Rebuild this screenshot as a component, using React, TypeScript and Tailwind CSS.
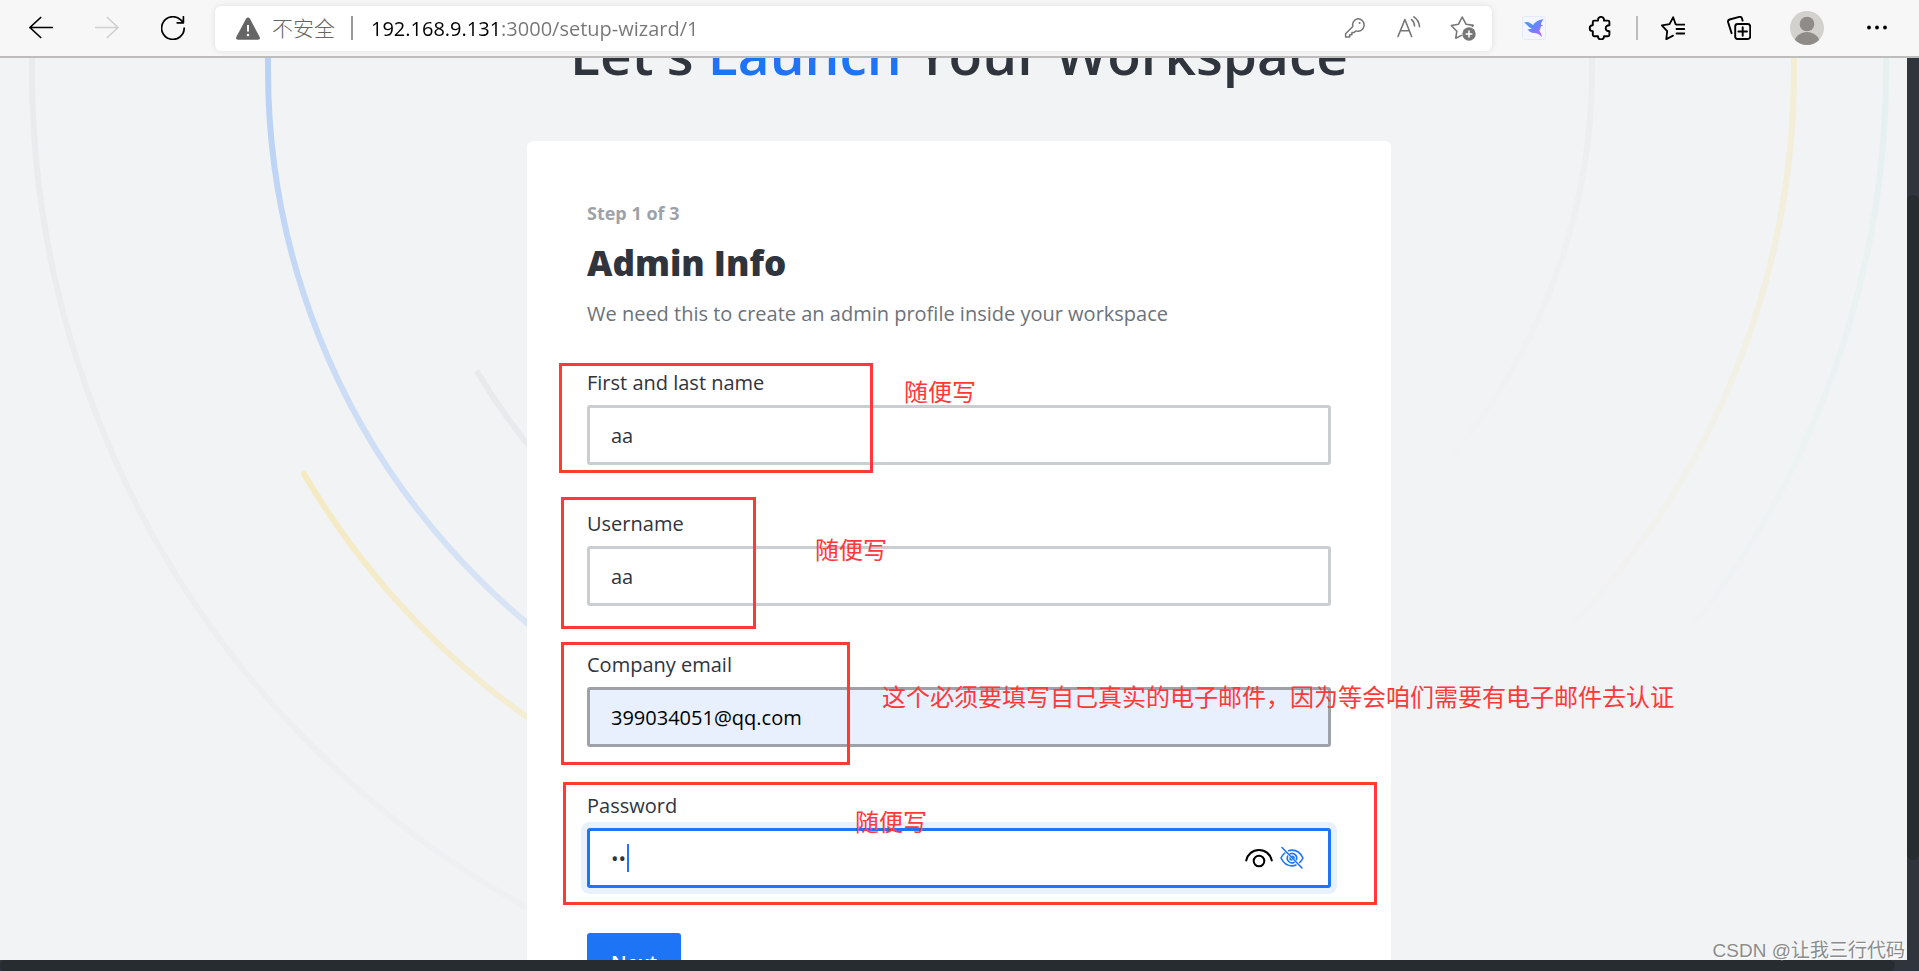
import { useState, type ReactNode } from "react";

function ToolButton({ label, className = "w-[66px]", children }: { label: string; className?: string; children: ReactNode }) {
  return (
    <button type="button" aria-label={label} className={`flex h-10 shrink-0 items-center justify-center ${className}`}>
      {children}
    </button>
  );
}

function Icon({ className = "size-6", children }: { className?: string; children: ReactNode }) {
  return (
    <svg
      viewBox="0 0 24 24"
      fill="none"
      stroke="currentColor"
      strokeWidth="1.7"
      strokeLinecap="round"
      strokeLinejoin="round"
      className={className}
      aria-hidden="true"
    >
      {children}
    </svg>
  );
}

function Toolbar() {
  const [url, setUrl] = useState("192.168.9.131:3000/setup-wizard/1");
  return (
    <header className="flex h-[58px] shrink-0 items-center border-b-2 border-[#bdbdbd] bg-[#f7f7f7] pr-[7px] pl-2 text-black">
      <ToolButton label="Back">
        <Icon>
          <path d="M23.3 11.5H.9M11.7 1.5.9 11.5l10.8 10" />
        </Icon>
      </ToolButton>
      <ToolButton label="Forward" className="w-[66px] text-[#d0d0d0]">
        <Icon>
          <path d="M.7 11.5h22.4M12.3 1.5l10.8 10-10.8 10" />
        </Icon>
      </ToolButton>
      <ToolButton label="Refresh">
        <Icon>
          <path d="M23.2 12a11.3 11.3 0 1 1-3.5-8.1l2.5 2.6M22.4.8v6h-6.2" />
        </Icon>
      </ToolButton>

      <div className="mx-[9px] flex h-[45px] min-w-0 flex-1 items-center rounded-md bg-white pr-0.5 pl-[21px] text-[#767676] shadow-[0_0_6px_rgba(0,0,0,0.1)]">
        <svg viewBox="0 0 24 23" className="h-[23px] w-6 shrink-0" aria-hidden="true">
          <path d="M12 .5c.8 0 1.400.4 1.800 1.100l9.800 18.200c.8 1.500 0 2.900-1.600 2.900H2c-1.600 0-2.400-1.400-1.600-2.900L10.200 1.600C10.600.9 11.200.5 12 .5Z" fill="#666" />
          <path d="M12 8v6.500" stroke="#fff" strokeWidth="2" />
          <circle cx="12" cy="18" r="1.300" fill="#fff" />
        </svg>
        <span className="ml-3 shrink-0 text-[21px] leading-8 font-light text-[#666]">不安全</span>
        <span className="ml-4 h-6 w-0.5 shrink-0 bg-[#999]" />
        <input
          aria-label="Address"
          value={url}
          onChange={(e) => setUrl(e.target.value)}
          className="ml-[18px] h-8 min-w-0 flex-1 bg-[linear-gradient(to_right,#000_131px,#767676_131px)] bg-clip-text text-[20px] text-transparent caret-black outline-none"
        />
        <ToolButton label="Passwords" className="w-[54px]">
          <Icon className="size-6">
            <path
              strokeWidth="1.5"
              d="M14.500 2.700a6.300 6.300 0 1 1-1.800 12.200l-1.600 1.700H8.900v2.200H6.700v2.300H2.600v-3.400l7.200-7.200a6.300 6.300 0 0 1 4.700-7.800Z"
            />
            <circle cx="16.600" cy="7" r="1" fill="currentColor" stroke="none" />
          </Icon>
        </ToolButton>
        <ToolButton label="Read aloud" className="w-[54px]">
          <Icon>
            <path strokeWidth="1.6" d="M1 20.500 7.900 3.500l6.700 17M3.400 14.800h9M14.600 3.600c1.800 1.500 2.900 3.800 2.900 6.400M16.900.9c3.200 2.200 5.300 5.400 5.600 9.700" />
          </Icon>
        </ToolButton>
        <ToolButton label="Add to favorites" className="w-[54px]">
          <svg viewBox="0 0 26 26" fill="none" className="size-[26px]" aria-hidden="true">
            <path
              d="M11.500 20.400 5.800 23.200l1-7L1.300 10.500l7.200-1.300L12.200 2l3.800 7.200 7.300 1.200-1 .9"
              stroke="currentColor"
              strokeWidth="1.600"
              strokeLinecap="round"
              strokeLinejoin="round"
            />
            <circle cx="19" cy="19" r="6.700" fill="currentColor" />
            <path d="M19 15.600v6.800M15.600 19h6.800" stroke="#fff" strokeWidth="1.600" />
          </svg>
        </ToolButton>
      </div>

      <ToolButton label="Bird extension">
        <svg viewBox="0 0 24 24" className="size-6" aria-hidden="true">
          <defs>
            <linearGradient id="bird" x1="0" y1="0" x2="1" y2="1">
              <stop offset="0" stopColor="#3ba7ff" />
              <stop offset="0.500" stopColor="#6a83ff" />
              <stop offset="1" stopColor="#c45cf6" />
            </linearGradient>
          </defs>
          <rect x="0.500" y="0.500" width="23" height="23" rx="2.500" fill="#f4f6ff" stroke="#e6ebfb" />
          <path
            d="M2 6.400c2.800-1 5-.5 6.600 1l2.600 1.700c1.500-2.900 4.900-5.300 10.400-5.900-1.800 2-2.700 3.900-2.600 5.500l2.200.7-2.400 1.100c-.1 1.700-.6 3.100-1.500 4.300 1.400 1.900 2.300 3.900 2.700 6.200-2-2.500-4.300-3.700-6.900-4.100-3.400.3-6-1.200-7.600-3.700 2 .2 3.400 0 4.300-.6C6.500 11.300 4.800 8.200 2 6.400Z"
            fill="url(#bird)"
          />
        </svg>
      </ToolButton>
      <ToolButton label="Extensions">
        <Icon>
          <path
            strokeWidth="1.900"
            d="M6.300 4.600H10c-.1-2.200 1-3.700 3-3.700s3.100 1.500 3 3.700h3.900c.9 0 1.500.6 1.500 1.500v3.200c-2.200-.1-3.700.9-3.700 2.900s1.500 3 3.700 2.900v3.700c0 .9-.6 1.500-1.500 1.500H16c.1 1.800-1.100 3.100-3 3.100s-3.100-1.300-3-3.100H6.300c-.9 0-1.500-.6-1.500-1.500v-3.700c-1.900 0-3.100-1.100-3.100-2.900s1.200-3 3.100-2.900V6.100c0-.9.600-1.500 1.500-1.500Z"
          />
        </Icon>
      </ToolButton>
      <span className="mr-0.5 ml-[3px] h-6 w-0.5 shrink-0 bg-[#bdbdbd]" />
      <ToolButton label="Favorites">
        <Icon>
          <path
            strokeWidth="1.800"
            d="M14.600 8.200 12.200 1.200 8.500 8.100.8 9.400l5.400 5.800-.9 8 6.700-3.600M15.500 8.600h8M15.500 13h8M15.500 17.500h8"
          />
        </Icon>
      </ToolButton>
      <ToolButton label="Collections">
        <Icon>
          <rect x="8.200" y="8" width="15" height="15" rx="2.500" strokeWidth="1.900" />
          <path strokeWidth="1.900" d="M15.700 11.200v8.600M11.400 15.500H20M4.600 17.200 1.100 6.200c-.3-1.200.3-2.300 1.500-2.700L12.300.9c1.200-.3 2.200.2 2.600 1.400l.7 2.300" />
        </Icon>
      </ToolButton>
      <ToolButton label="Profile" className="w-[70px]">
        <svg viewBox="0 0 34 34" className="size-[34px]" aria-hidden="true">
          <defs>
            <clipPath id="avatar">
              <circle cx="17" cy="17" r="17" />
            </clipPath>
          </defs>
          <g clipPath="url(#avatar)">
            <rect width="34" height="34" fill="#d3d1ce" />
            <circle cx="17" cy="13" r="7.300" fill="#8f8b88" />
            <ellipse cx="17" cy="33" rx="13" ry="12" fill="#8f8b88" />
          </g>
        </svg>
      </ToolButton>
      <ToolButton label="Settings and more" className="w-[70px]">
        <Icon>
          <g fill="currentColor" stroke="none">
            <circle cx="4" cy="11.500" r="1.900" />
            <circle cx="12" cy="11.500" r="1.900" />
            <circle cx="20" cy="11.500" r="1.900" />
          </g>
        </Icon>
      </ToolButton>
    </header>
  );
}

function Fade({ id, color, from, to, end }: { id: string; color: string; from: number; to: number; end: number }) {
  return (
    <linearGradient id={id} gradientUnits="userSpaceOnUse" x1="0" y1="0" x2="0" y2={end}>
      <stop offset="0" stopColor={color} stopOpacity={from} />
      <stop offset="1" stopColor={color} stopOpacity={to} />
    </linearGradient>
  );
}

function Rings() {
  return (
    <svg
      viewBox="0 0 1919 913"
      preserveAspectRatio="xMidYMin slice"
      fill="none"
      strokeWidth="6"
      strokeLinecap="round"
      className="absolute inset-0 size-full"
      aria-hidden="true"
    >
      <defs>
        <Fade id="outer" color="#9ea2a8" from={0.1} to={0.03} end={913} />
        <Fade id="blue" color="#1d74f5" from={0.27} to={0.08} end={680} />
        <Fade id="gold" color="#ffd031" from={0.42} to={0.12} end={800} />
        <Fade id="inner" color="#9ea2a8" from={0.14} to={0.1} end={500} />
        <Fade id="grayRight" color="#9ea2a8" from={0.07} to={0} end={440} />
        <Fade id="goldRight" color="#ffd031" from={0.17} to={0} end={590} />
        <Fade id="greenRight" color="#2dbf9a" from={0.06} to={0} end={600} />
      </defs>
      <path d="M32 0V12A956 956 0 0 0 988 968" stroke="url(#outer)" />
      <path d="M268 0V12A720 720 0 0 0 988 732" stroke="url(#blue)" />
      <path d="M304 416A795 795 0 0 0 988 807" stroke="url(#gold)" />
      <path d="M478 315A593 593 0 0 0 988 605" stroke="url(#inner)" />
      <path d="M1592 0V12A603 603 0 0 1 989 615" stroke="url(#grayRight)" />
      <path d="M1794 0V12A804 804 0 0 1 990 816" stroke="url(#goldRight)" />
      <path d="M1886 0V12A897 897 0 0 1 989 909" stroke="url(#greenRight)" />
    </svg>
  );
}

const fieldBase = "h-[60px] w-full rounded-[3px] border-[3px] px-[21px] text-[20px] outline-none";

function Field({ id, label, children }: { id: string; label: string; children: ReactNode }) {
  return (
    <div className="flex flex-col gap-[7px]">
      <label htmlFor={id} className="text-[20px] leading-[30px] font-medium text-[#2f343d]">
        {label}
      </label>
      {children}
    </div>
  );
}

function Note({ className, children }: { className: string; children: ReactNode }) {
  return (
    <p className={`pointer-events-none absolute text-[24px] leading-8 whitespace-nowrap text-[#ff3838] ${className}`}>
      {children}
    </p>
  );
}

function Frame({ className }: { className: string }) {
  return <div className={`pointer-events-none absolute border-[3px] border-[#ff3838] ${className}`} />;
}

function SetupForm() {
  const [name, setName] = useState("aa");
  const [user, setUser] = useState("aa");
  const [email, setEmail] = useState("399034051@qq.com");
  const [password, setPassword] = useState("aa");
  const [visible, setVisible] = useState(false);
  return (
    <section className="relative w-[864px] max-w-full rounded-md bg-white p-[60px]">
      <p className="text-[18px] leading-6 font-bold text-[#9ea2a8]">Step 1 of 3</p>
      <h2 className="mt-3.5 text-[35px] leading-[48px] font-extrabold text-[#2f343d]">Admin Info</h2>
      <p className="mt-3 text-[20px] leading-[30px] text-[#6c727a]">
        We need this to create an admin profile inside your workspace
      </p>

      <form className="mt-[39px] flex flex-col gap-11" onSubmit={(e) => e.preventDefault()}>
        <Field id="name" label="First and last name">
          <input
            id="name"
            value={name}
            onChange={(e) => setName(e.target.value)}
            className={`${fieldBase} border-[#cbced1] bg-white text-[#2f343d]`}
          />
        </Field>
        <Field id="username" label="Username">
          <input
            id="username"
            value={user}
            onChange={(e) => setUser(e.target.value)}
            className={`${fieldBase} border-[#cbced1] bg-white text-[#2f343d]`}
          />
        </Field>
        <Field id="email" label="Company email">
          <input
            id="email"
            type="email"
            value={email}
            onChange={(e) => setEmail(e.target.value)}
            className={`${fieldBase} border-[#9ea2a8] bg-[#e8f0fe] text-black`}
          />
        </Field>
        <Field id="password" label="Password">
          <div className="relative">
            <input
              id="password"
              type={visible ? "text" : "password"}
              value={password}
              onChange={(e) => setPassword(e.target.value)}
              className={`${fieldBase} border-[#1d74f5] bg-white pr-24 text-[#2f343d] caret-transparent shadow-[0_0_0_6px_#e8f2ff]`}
            />
            <span className="absolute top-4 left-10 h-7 w-0.5 bg-[#1d74f5]" />
            <div className="absolute inset-y-0 right-[26px] flex items-center gap-1.5">
              <button type="button" aria-label="Reveal password" onClick={() => setVisible(!visible)}>
                <svg viewBox="0 0 28 20" fill="none" stroke="#000" strokeWidth="2" strokeLinecap="round" className="h-5 w-7" aria-hidden="true">
                  <path d="M1.200 12.500C2.600 6.200 7.600 2 14 2s11.400 4.200 12.800 10.500" />
                  <circle cx="14" cy="13" r="5.300" />
                </svg>
              </button>
              <button type="button" aria-label="Toggle visibility" onClick={() => setVisible(!visible)}>
                <svg viewBox="0 0 26 24" fill="none" stroke="#1d74f5" strokeWidth="1.600" strokeLinecap="round" className="h-6 w-[26px]" aria-hidden="true">
                  <path d="M3 1.500 23 22" />
                  <path d="M9.600 4.700c1.100-.4 2.200-.6 3.400-.6 4.700 0 8.600 3 11 7.900-.9 1.800-2 3.300-3.300 4.500M17 19c-1.300.6-2.600.9-4 .9-4.700 0-8.600-3-11-7.900 1-2 2.300-3.700 3.800-5" />
                  <path d="M11.200 7.700a4.800 4.800 0 0 1 6.300 5.900M15 16.400A4.800 4.800 0 0 1 8.600 10.200" />
                  <path d="M13.200 10.200a2 2 0 0 1 1.900 2M12.800 14a2 2 0 0 1-1.800-1.900" />
                </svg>
              </button>
            </div>
          </div>
        </Field>
        <button
          type="submit"
          className="mt-px h-[60px] self-start rounded-[3px] bg-[#1d74f5] px-6 text-[20px] font-semibold text-white"
        >
          Next
        </button>
      </form>

      <Frame className="top-[222px] left-8 h-[110px] w-[314px]" />
      <Frame className="top-[356px] left-[34px] h-[132px] w-[195px]" />
      <Frame className="top-[501px] left-[34px] h-[123px] w-[289px]" />
      <Frame className="top-[641px] left-9 h-[123px] w-[814px]" />
      <Note className="top-[235px] left-[377px]">随便写</Note>
      <Note className="top-[393px] left-[288px]">随便写</Note>
      <Note className="top-[540px] left-[355px]">这个必须要填写自己真实的电子邮件，因为等会咱们需要有电子邮件去认证</Note>
      <Note className="top-[665px] left-[328px]">随便写</Note>
    </section>
  );
}

export default function App() {
  return (
    <div className="flex h-screen flex-col overflow-hidden bg-[#f1f3f5] font-['Open_Sans','Noto_Sans_CJK_SC',sans-serif]">
      <Toolbar />
      <main className="relative min-h-0 flex-1 overflow-hidden">
        <Rings />
        <div className="relative -mt-10 flex flex-col items-center gap-[51px] pr-px">
          <h1 className="text-center text-[55px] leading-[72px] font-semibold text-[#2f343d]">
            Let's <span className="text-[#1d74f5]">Launch</span> Your Workspace
          </h1>
          <SetupForm />
        </div>
        <div className="absolute inset-y-0 right-0 w-3 bg-[#2f343d]">
          <div className="mt-[137px] h-[665px] rounded-full bg-[#272c30]" />
        </div>
        <div className="absolute inset-x-0 bottom-0 h-[11px] bg-[#2f343d]">
          <div className="mr-6 h-full rounded-full bg-[#272c30]" />
        </div>
        <p className="absolute right-[14px] bottom-1.5 text-[19px] leading-7 text-[#8c8c8c] [text-shadow:1px_1px_0_#fff] font-['Liberation_Sans','Noto_Sans_CJK_SC',sans-serif]">
          CSDN @让我三行代码
        </p>
      </main>
    </div>
  );
}
